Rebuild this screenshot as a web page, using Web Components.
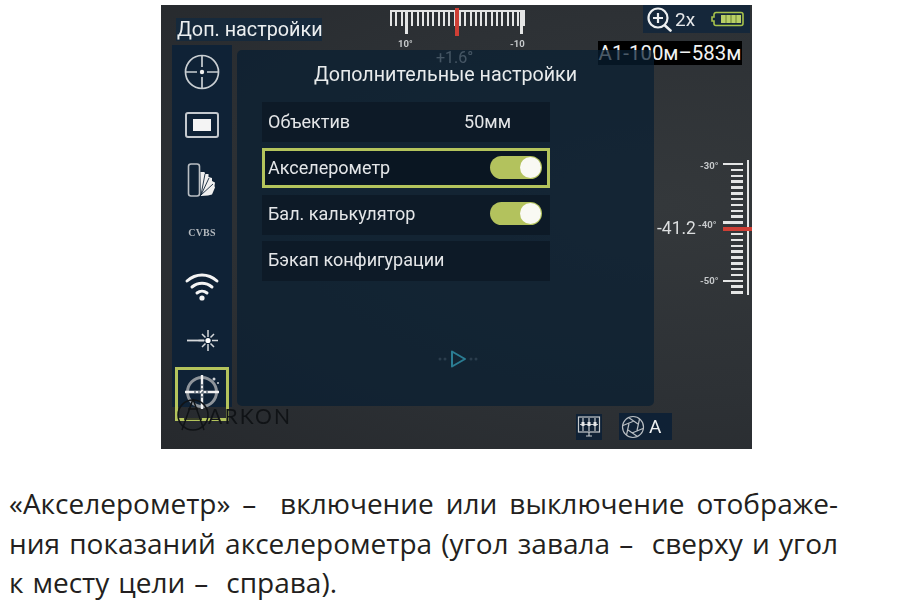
<!doctype html>
<html lang="ru"><head><meta charset="utf-8"><title>Акселерометр</title>
<style>
html,body{margin:0;background:#fff}
body{width:898px;height:600px;overflow:hidden;font-family:Roboto,"Liberation Sans",sans-serif}
</style></head><body>
<doc-page>
<ui-screen>
  <top-bar slot="top"></top-bar>
  <side-nav slot="side">
    <nav-icon><svg width="38" height="38" viewBox="0 0 38 38" fill="none" stroke="#c9ced2" stroke-width="1.7"><circle cx="19" cy="19" r="16.500"/><path d="M19 2v12M19 24v12M2 19h12M24 19h12"/><circle cx="19" cy="19" r="2.200" fill="#eee" stroke="none"/></svg></nav-icon>
    <nav-icon><svg width="38" height="38" viewBox="0 0 38 38" fill="none"><rect x="3" y="7" width="32" height="24" rx="2" stroke="#c4c9ce" stroke-width="2"/><rect x="10" y="13" width="18" height="12" fill="#f4f4f4"/></svg></nav-icon>
    <nav-icon><svg width="38" height="38" viewBox="0 0 38 38" fill="none"><rect x="5.500" y="4" width="11" height="32" rx="2.500" stroke="#b9bec3" stroke-width="1.600"/><path d="M17.500 12l4 0 .5 2 3.500 0 0 3 3.500 1 0 3 3 1.500-.5 3.500 .5 1.500-3 7-4 1-7 .5z" fill="#f0f0f0"/><path d="M18 35l4-21M18 35l8-17M18 35l12-11" stroke="#0f2237" stroke-width=".9"/></svg></nav-icon>
    <nav-icon><span class="cvbs">CVBS</span></nav-icon>
    <nav-icon><svg width="38" height="38" viewBox="0 0 38 38" fill="none" stroke="#f4f4f4" stroke-width="3" stroke-linecap="round" style="margin-top:-3px"><path d="M4 15c9-8 21-8 30 0M9 21c6-5 14-5 20 0M14 27c3-2.500 7-2.500 10 0"/><circle cx="19" cy="32" r="2.600" fill="#f4f4f4" stroke="none"/></svg></nav-icon>
    <nav-icon><svg width="38" height="38" viewBox="0 0 38 38" fill="none" stroke="#d6d9dc" stroke-width="1.500"><path d="M4 19.500h17" stroke-width="1.800"/><path d="M25 9v7M25 23v7M15.500 19.500h6M29 19.500h6M19 13l3.500 3.500M31 13l-3.500 3.500M19 26l3.500-3.500M31 26l-3.500-3.500"/><circle cx="25" cy="19.500" r="2.600" fill="#fff" stroke="none"/></svg></nav-icon>
    <nav-icon selected><svg width="40" height="40" viewBox="0 0 40 40" fill="none" style="margin-top:-4px"><circle cx="20" cy="20" r="14.500" stroke="#8f959b" stroke-width="3"/><path d="M20 3v34M3 20h34" stroke="#f1f1f1" stroke-width="2.400"/><path d="M12 20h16M20 12v16" stroke="#1a2c3e" stroke-width="1" stroke-dasharray="2 2"/><circle cx="32" cy="7" r="1.500" fill="#cfd3d6"/><circle cx="36" cy="11" r="1" fill="#cfd3d6"/></svg></nav-icon>
  </side-nav>
  <menu-panel slot="panel" heading="Дополнительные настройки">
    <menu-row label="Объектив" value="50мм"></menu-row>
    <menu-row label="Акселерометр" toggle selected></menu-row>
    <menu-row label="Бал. калькулятор" toggle></menu-row>
    <menu-row label="Бэкап конфигурации"></menu-row>
  </menu-panel>
  <status-chips slot="bottom"></status-chips>
  <angle-rulers slot="overlay"></angle-rulers>
  <brand-mark slot="overlay"></brand-mark>
</ui-screen>
<doc-text></doc-text>
</doc-page>
<script>
function def(name, css, html, init){
  customElements.define(name, class extends HTMLElement{
    connectedCallback(){
      if(this.shadowRoot) return;
      const r=this.attachShadow({mode:'open'});
      r.innerHTML='<style>'+css+'</style>'+(typeof html==='function'?html(this):html);
      if(init) init(r,this);
    }
  });
}
def('doc-page',':host{display:block;padding:5px 0 0 161px}','<slot></slot>');
def('ui-screen',`
:host{display:flex;flex-direction:column;position:relative;width:591px;height:444px;box-sizing:border-box;padding-left:11px;color:#eef0f1;
 background:radial-gradient(ellipse at 85% 45%,#34383b 0,#2d3135 55%,#26292d 100%);filter:blur(.35px)}
.top{height:40px;flex:none}
.mid{display:flex;gap:5px;height:362px;flex:none;align-items:flex-start}
.bot{margin-top:6px;flex:none}
`,`<div class="top"><slot name="top"></slot></div><div class="mid"><slot name="side"></slot><slot name="panel"></slot></div><div class="bot"><slot name="bottom"></slot></div><slot name="overlay"></slot>`);
def('top-bar',`
:host{display:flex;align-items:flex-start;justify-content:space-between;height:40px;padding-right:2px}
.label{margin:13px 0 0 4px;height:23px;line-height:23px;padding:0 0 0 1px;width:145px;background:#16293b;font-size:19.800px;white-space:nowrap;color:#eceff0}
.zoom{display:flex;align-items:center;width:107px;height:28px;box-sizing:border-box;padding-left:3px;background:#15273a}
.x{font-size:19px;margin-left:2px;color:#e6e8ea}
.zoom svg.b{margin-left:16px}
`,`<div class="label">Доп. настройки</div>
<div class="zoom"><svg width="27" height="27" viewBox="0 0 27 27" fill="none" stroke="#eef0f1" stroke-width="2.200"><circle cx="12" cy="12" r="9.500"/><path d="M12 7v10M7 12h10" /><path d="M19 19.500l5.500 5" stroke-width="2.600" stroke-linecap="round"/></svg><span class="x">2x</span>
<svg class="b" width="33" height="16" viewBox="0 0 33 16"><path d="M5 1.500h25a2 2 0 0 1 2 2v9a2 2 0 0 1-2 2H5a2 2 0 0 1-2-2v-2.500H1V6h2V3.500a2 2 0 0 1 2-2z" fill="none" stroke="#a7c24b" stroke-width="1.600"/><rect x="10" y="4" width="20" height="8" fill="#b9cf66"/><path d="M15 4v8M20 4v8M25 4v8" stroke="#6b8232" stroke-width="1"/></svg></div>`);
def('side-nav',`:host{display:flex;flex-direction:column;align-items:center;width:60px;height:362px;background:#0f2236;box-sizing:border-box}`,`<slot></slot>`);
def('nav-icon',`
:host{display:flex;align-items:center;justify-content:center;width:54px;height:53.600px;box-sizing:border-box;flex:none}
:host([selected]){border:3px solid #b4c45c;height:54px}
::slotted(.cvbs){font:bold 10px "Liberation Serif",serif;color:#b4b9be;letter-spacing:.2px}
`,`<slot></slot>`);
def('menu-panel',`
:host{display:block;position:relative;z-index:2;width:417px;height:356px;margin-top:5px;box-sizing:border-box;padding:0 104px 0 25px;border-radius:5px;background:rgba(9,30,50,.72)}
h2{margin:0;height:52px;box-sizing:border-box;padding-top:11px;text-align:center;font-weight:400;font-size:19.700px;line-height:28px;color:#e8ebec;width:367px;white-space:nowrap}
.rows{display:flex;flex-direction:column;gap:6.300px}
.play{position:absolute;left:195px;top:299px;display:block}
`,h=>`<h2>${h.getAttribute('heading')}</h2><div class="rows"><slot></slot></div><svg class="play" width="60" height="20" viewBox="0 0 60 20" fill="none"><path d="M20 2.500l13 7.500-13 7.500z" stroke="#2b7d93" stroke-width="2" stroke-linejoin="round"/><g fill="#2b3d4d"><circle cx="8" cy="10" r="1.500"/><circle cx="13" cy="10" r="1.500"/><circle cx="39" cy="10" r="1.500"/><circle cx="44" cy="10" r="1.500"/></g></svg>`);
def('menu-row',`
:host{display:flex;align-items:center;width:288px;height:40px;box-sizing:border-box;padding:0 8px 2px 6px;background:#0d1a27;font-size:18px;color:#e4e6e8;white-space:nowrap}
:host([selected]){border:3px solid #b4c45c;padding:0 5px 2px 3px;background:#0a1622}
.v{margin-left:auto;margin-right:31px}
.t{margin-left:auto;width:52px;height:23px;border-radius:12px;background:#b3c25d;position:relative}
.t i{position:absolute;right:1px;top:1px;width:21px;height:21px;border-radius:50%;background:#f9f9f3}
`,h=>`<span>${h.getAttribute('label')}</span>`+(h.hasAttribute('value')?`<span class="v">${h.getAttribute('value')}</span>`:'')+(h.hasAttribute('toggle')?`<span class="t"><i></i></span>`:''));
def('status-chips',`
:host{display:flex;justify-content:flex-end;gap:17px;padding-right:80px;align-items:flex-start}
.a{width:26px;height:26px;margin-top:1px;background:#0f2135;display:flex;align-items:center;justify-content:center}
.b{width:53px;height:27px;background:#0f2135;display:flex;align-items:center;gap:4px;padding-left:2px;box-sizing:border-box;font-size:19px;color:#eef0f1}
`,`<div class="a"><svg width="24" height="24" viewBox="0 0 24 24" fill="none" stroke="#c6cacd" stroke-width="1.200"><rect x="1.500" y="2" width="21" height="15"/><path d="M6 3v13M12 3v13M18 3v13M3 9.500h18M9 21h6M12 17v4"/><g fill="#e6e8ea" stroke="none"><rect x="4.500" y="7" width="3" height="4"/><rect x="10.500" y="7" width="3" height="4"/><rect x="16.500" y="7" width="3" height="4"/></g></svg></div>
<div class="b"><svg width="24" height="24" viewBox="0 0 24 24" fill="none" stroke="#b9bec2" stroke-width="1.200"><circle cx="12" cy="12" r="10.500"/><path d="M7.500 2.500L17 9M18.500 4L16 15.500M22 13.500L11 18M16.500 21.500L7 15M5.500 20L8 8.500M2 10.500L13 6"/></svg><span>A</span></div>`);
def('brand-mark',`
:host{position:absolute;left:15px;top:392px;z-index:4;display:flex;align-items:center;color:#101316;pointer-events:none}
span{font:400 21px Lato,sans-serif;letter-spacing:2.200px;margin-left:-2px}
`,`<svg width="34" height="36" viewBox="0 0 34 36" fill="none" stroke="#101316" stroke-width="1.500"><circle cx="17" cy="18" r="15"/><path d="M17 2L6 33M17 2l11 31M8 22h18M12 12h10" /></svg><span>ARKON</span>`);
def('angle-rulers',`
:host{position:absolute;inset:0;display:block;pointer-events:none;color:#d8dadb}
.tick{position:absolute;background:#e4e5e5}
.red{position:absolute;background:#cf3f35}
.s{position:absolute;font-size:9.500px;font-weight:700;color:#c6c9cb;white-space:nowrap;line-height:10px}
.ang{position:absolute;left:275px;top:44px;font-size:16px;color:#e2e4e5;line-height:18px}
.a1{position:absolute;left:437px;top:36px;width:144px;height:24px;line-height:24px;background:#000;color:#f2f3f3;font-size:20.400px;white-space:nowrap;text-align:center}
.v41{position:absolute;left:496px;top:213px;font-size:17.500px;line-height:20px;color:#dcdedf}
`,`<div class="a1">A1-100м–583м</div><div class="ang">+1.6°</div><div class="v41">-41.2</div><div id="g"></div>`,(r)=>{
  const g=r.getElementById('g');let o='';
  const box=(c,l,t,w,h)=>`<i class="${c}" style="left:${l}px;top:${t}px;width:${w}px;height:${h}px"></i>`;
  o+=box('tick',229,5,135,2);
  for(let i=0;i<=25;i++){const x=229+i*5.3;o+=box('tick',x,7,2,14)}
  o+=box('tick',244,7,2.500,22);o+=box('tick',359,7,2.500,22);
  o+=box('red',294,3,4,28);
  o+=box('tick',586,155,2,135);
  for(let i=0;i<=22;i++){const y=158+i*5.83;const mj=i%10==0;o+=box('tick',mj?562:570,y,mj?20:12,2.400)}
  o+=box('red',562,222,29,3.500);
  g.innerHTML=o+`<span class="s" style="left:237px;top:34px">10°</span><span class="s" style="left:349px;top:34px;width:16px;overflow:hidden">-10</span>
  <span class="s" style="left:539px;top:156px">-30°</span><span class="s" style="left:537px;top:215px">-40°</span><span class="s" style="left:539px;top:271px">-50°</span>`;
});
def('doc-text',`
:host{display:flex;flex-direction:column;gap:7.500px;margin:38px 0 0 -152px;width:829px;font-family:"Open Sans",sans-serif;font-size:28px;line-height:32px;color:#231f20}
div{white-space:nowrap}
.j{white-space:normal;text-align:justify;text-align-last:justify}
.l{word-spacing:1.700px}
`,`<div class="j">«Акселерометр» –&nbsp; включение или выключение отображе-</div><div class="j">ния показаний акселерометра (угол завала – &nbsp;сверху и угол</div><div class="l">к месту цели – &nbsp;справа).</div>`);
</script>
</body></html>
